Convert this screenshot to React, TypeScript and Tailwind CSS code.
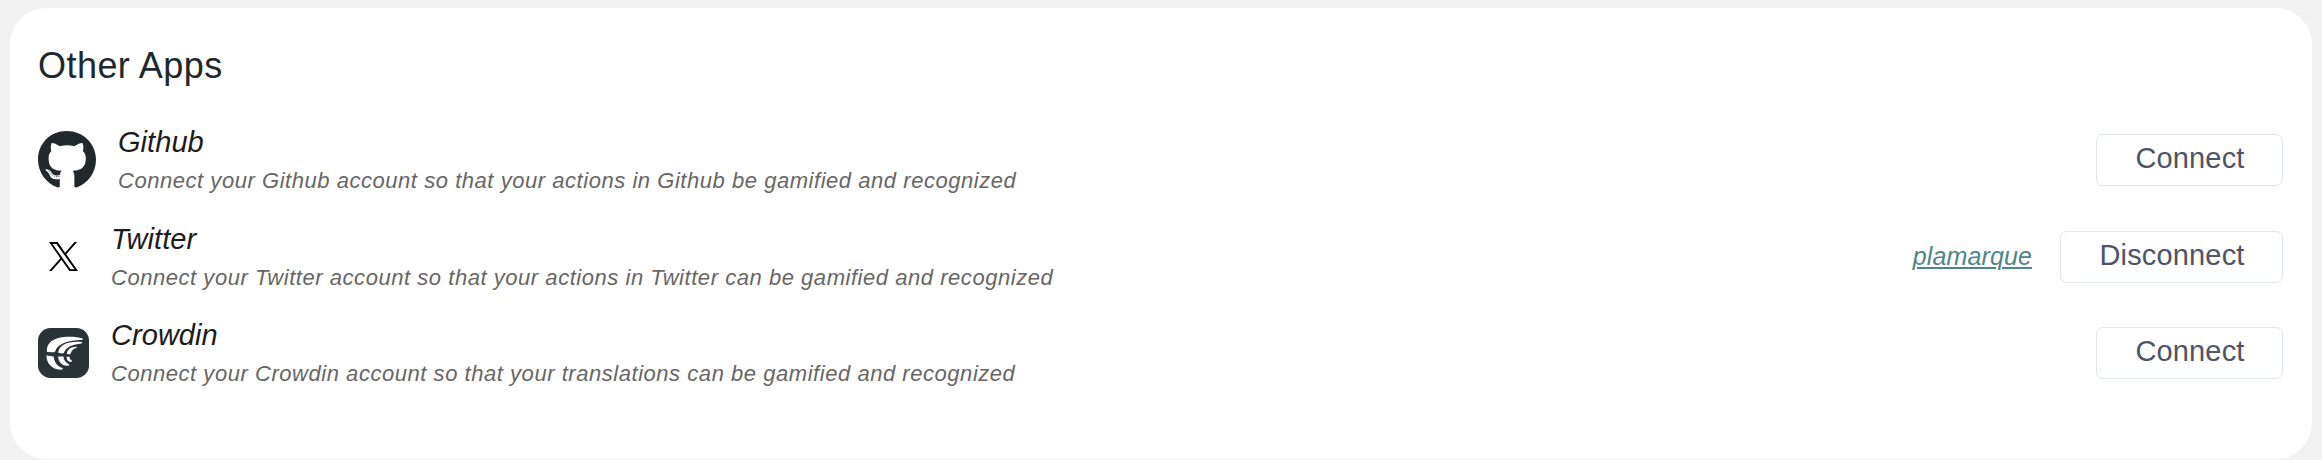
import { FaGithub } from "react-icons/fa";
import type { ReactNode } from "react";

function XLogo() {
  return (
    <svg viewBox="0 0 300 300" className="h-[29px] w-[29px]" fill="#000">
      <path d="M178.57 127.15 290.27 0h-26.46l-97.03 110.38L89.34 0H0l117.13 166.93L0 300.25h26.46l102.4-116.59 81.8 116.59H300M36.01 19.54h40.65l187.13 262.13h-40.66" />
    </svg>
  );
}

function CrowdinLogo() {
  return (
    <svg viewBox="0 0 51 50" className="h-[50px] w-[51px]">
      <rect width="51" height="50" rx="12.5" fill="#2a3338" />
      <g fill="#fff">
        <path d="M9 24C8 14 17 8.800 31 8.800c5.500 0 10.500.5 13.700 1.700.5 1.200-.4 1.500-1.800 1.600C31 12.500 21 15 17.500 22.400c-.6 1.500-1.400 2-3 1.900z" />
        <path d="M20.200 24.800C21 17 29.500 13 43.600 13.900c1 .5.800 1.300-.3 1.500-8.300.9-14.800 3.100-17 8.700-.4 1.200-1 1.500-2.200 1.400z" />
        <path d="M28.800 25.900c.6-4.700 4-7.100 9.600-7.200.8.400.6 1.100-.2 1.400-2.900.8-4.700 2.800-5.500 5.300-.3.800-.8.900-1.600.9z" />
        <path d="M8.400 27.300c2.500.7 4.600 1 7.200 1.100.6 5.300 3.300 9.600 8.900 11.600.6.800 0 1.500-1 1.600C14.500 42.200 8.200 35.500 8.400 27.300z" />
        <path d="M20.100 28.600h5.300c.4 3.500 2.200 6.300 5.500 7.600.5.700.2 1.300-.6 1.500-5.600.9-9.900-3.400-10.200-9.100z" />
        <path d="M28.500 28.700h3c.2 1.900.9 3 2.300 3.900.3.600 0 1.200-.6 1.300-2.700.2-4.700-2.200-4.700-5.200z" />
      </g>
    </svg>
  );
}

type AppRowProps = {
  icon: ReactNode;
  name: string;
  description: string;
  action: string;
  account?: string;
};

function AppRow({ icon, name, description, action, account }: AppRowProps) {
  return (
    <li className="flex h-[96.5px] items-start">
      <div className="flex h-[64px] shrink-0 items-center">{icon}</div>
      <div className="-mt-[3px] min-w-0 grow italic">
        <h3 className="text-[29px] leading-[34px] tracking-[0.05px] text-[#1c1c1c]">{name}</h3>
        <p className="mt-[6px] text-[22px] leading-[32px] tracking-[0.54px] text-[#666]">{description}</p>
      </div>
      <div className="flex h-[64px] shrink-0 items-center gap-7">
        {account && (
          <a
            href="#"
            className="mt-px text-[25px] tracking-[0.12px] text-[#4d8686] italic underline decoration-2 underline-offset-2"
          >
            {account}
          </a>
        )}
        <button className="h-[52px] rounded-[7px] border border-[#e1e6ed] pr-[37.5px] pb-[3px] pl-[38.5px] text-[29px] leading-[47px] tracking-[0.15px] text-[#4d5466]">
          {action}
        </button>
      </div>
    </li>
  );
}

export default function App() {
  return (
    <main className="h-[460px] bg-[#f1f1f1] px-[10px] pt-2 font-['Liberation_Sans',Arial,sans-serif]">
      <section className="h-[451px] rounded-[36px] bg-white pt-[37px] pr-[29px] pl-[28px]">
        <h2 className="text-[36px] leading-[42px] tracking-[0.45px] text-[#20282c]">Other Apps</h2>
        <ul className="mt-[41px]">
          <AppRow
            icon={<FaGithub className="mr-[22px] h-[60px] w-[58px] text-[#22292d]" />}
            name="Github"
            description="Connect your Github account so that your actions in Github be gamified and recognized"
            action="Connect"
          />
          <AppRow
            icon={<div className="mr-[22px] flex w-[51px] justify-center"><XLogo /></div>}
            name="Twitter"
            description="Connect your Twitter account so that your actions in Twitter can be gamified and recognized"
            action="Disconnect"
            account="plamarque"
          />
          <AppRow
            icon={<div className="mr-[22px]"><CrowdinLogo /></div>}
            name="Crowdin"
            description="Connect your Crowdin account so that your translations can be gamified and recognized"
            action="Connect"
          />
        </ul>
      </section>
    </main>
  );
}
